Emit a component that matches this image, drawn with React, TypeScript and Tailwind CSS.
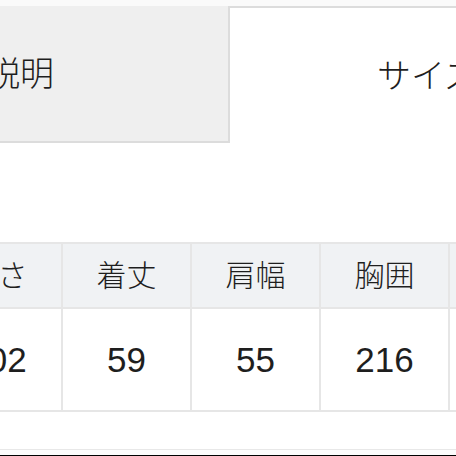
const headers = ['長さ', '着丈', '肩幅', '胸囲', '袖丈'];
const values = ['102', '59', '55', '216', '60'];

export default function App() {
  return (
    <div
      className="w-[456px] h-[456px] overflow-hidden bg-white flex flex-col text-[#1e1e1e]"
      style={{ fontFamily: '"Liberation Sans", "Noto Sans CJK JP", sans-serif' }}
    >
      <div className="h-[6px] bg-[#fafafa]" />
      <div className="flex h-[137px]">
        <div className="w-[230px] shrink-0 bg-[#efefef] border-b-2 border-r-2 border-[#dcdcdc] flex items-center overflow-hidden">
          <span className="-ml-[82px] text-[34px] font-light leading-none whitespace-nowrap">商品説明</span>
        </div>
        <div className="flex-1 border-t-2 border-[#dcdcdc] flex items-center overflow-hidden">
          <span className="ml-[147px] text-[34px] font-light leading-none whitespace-nowrap">サイズ表</span>
        </div>
      </div>
      <div className="mt-[99px] -ml-[66px] flex flex-col">
        <div className="flex h-[67px] bg-[#f0f2f4] border-y-2 border-[#e6e6e6]">
          {headers.map((h) => (
            <div
              key={h}
              className="w-[129px] shrink-0 border-r-2 border-[#e6e6e6] flex items-center justify-center text-[30px] font-light leading-none"
            >
              {h}
            </div>
          ))}
        </div>
        <div className="flex h-[103px] border-b-2 border-[#e6e6e6]">
          {values.map((v, i) => (
            <div
              key={i}
              className="w-[129px] shrink-0 border-r-2 border-[#e6e6e6] flex items-center justify-center text-[35px] leading-none"
            >
              {v}
            </div>
          ))}
        </div>
      </div>
      <div className="mt-auto h-[6px] border-t border-[#e8e8e8] bg-[#fcfcfc]" />
      <div className="h-[1px] bg-black" />
    </div>
  );
}
